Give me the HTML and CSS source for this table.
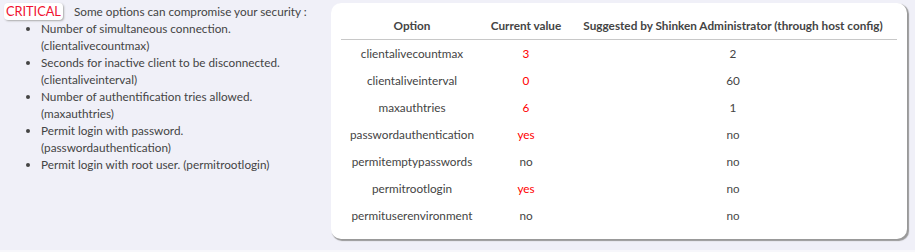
FILE: index.html
```html
<!DOCTYPE html>
<html lang="en">
<head>
    <meta charset="UTF-8">
    <title>SSH security check</title>
    <link rel="stylesheet" href="styles.css">
</head>
<body>
    <div class="page">
        <div class="summary">
            <div class="summary-head">
                <span class="badge">CRITICAL</span>
                <span class="intro">Some options can compromise your security :</span>
            </div>
            <ul class="issues">
                <li>Number of simultaneous connection. (clientalivecountmax)</li>
                <li>Seconds for inactive client to be disconnected. (clientaliveinterval)</li>
                <li>Number of authentification tries allowed. (maxauthtries)</li>
                <li>Permit login with password. (passwordauthentication)</li>
                <li>Permit login with root user. (permitrootlogin)</li>
            </ul>
        </div>

        <div class="card">
            <table class="options">
                <thead>
                    <tr>
                        <th class="col-option">Option</th>
                        <th class="col-current">Current value</th>
                        <th class="col-suggested">Suggested by Shinken Administrator (through host config)</th>
                    </tr>
                </thead>
                <tbody>
                    <tr><td>clientalivecountmax</td><td class="bad">3</td><td>2</td></tr>
                    <tr><td>clientaliveinterval</td><td class="bad">0</td><td>60</td></tr>
                    <tr><td>maxauthtries</td><td class="bad">6</td><td>1</td></tr>
                    <tr><td>passwordauthentication</td><td class="bad">yes</td><td class="plain">no</td></tr>
                    <tr><td>permitemptypasswords</td><td>no</td><td class="plain">no</td></tr>
                    <tr><td>permitrootlogin</td><td class="bad">yes</td><td class="plain">no</td></tr>
                    <tr><td>permituserenvironment</td><td>no</td><td class="plain">no</td></tr>
                </tbody>
            </table>
        </div>
    </div>
</body>
</html>
```

FILE: styles.css
```css
body {
    margin: 0;
    background-color: #f0f0f8;
    font-family: Lato, 'Liberation Sans', sans-serif;
    font-size: 11.75px;
    color: #444;
}
.page {
    display: flex;
    align-items: flex-start;
    height: 250px;
    border-bottom: 2px solid #f7f7fb;
}
.summary {
    width: 311px;
    flex-shrink: 0;
    padding: 3px 20px 0 0;
}
.summary-head {
    display: flex;
    align-items: center;
    padding-left: 4px;
    white-space: nowrap;
}
.badge {
    background-color: #fff;
    color: #f01030;
    font-size: 12.75px;
    padding: 1px 2px;
    border-radius: 4px;
    box-shadow: 1px 1px 2px #aaa;
    line-height: 15px;
}
.intro {
    margin-left: 11px;
}
.issues {
    margin: 0;
    padding-left: 41px;
    line-height: 17px;
}
.card {
    width: 556px;
    margin-top: 3px;
    padding: 9px 10px 10px;
    background-color: #fff;
    border-radius: 10px;
    box-shadow: 1.5px 1.5px 1px #999;
}
.options {
    width: 100%;
    border-collapse: collapse;
    text-align: center;
}
.options th {
    height: 27px;
    font-weight: bold;
    border-bottom: 1px solid #c8c8c8;
    padding: 0;
}
.options td {
    height: 27px;
    padding: 0;
}
.col-option {
    width: 142px;
}
.col-current {
    width: 86px;
}
.bad {
    color: #f00;
}
.plain {
    font-family: 'Liberation Sans', Arial, sans-serif;
}
```
